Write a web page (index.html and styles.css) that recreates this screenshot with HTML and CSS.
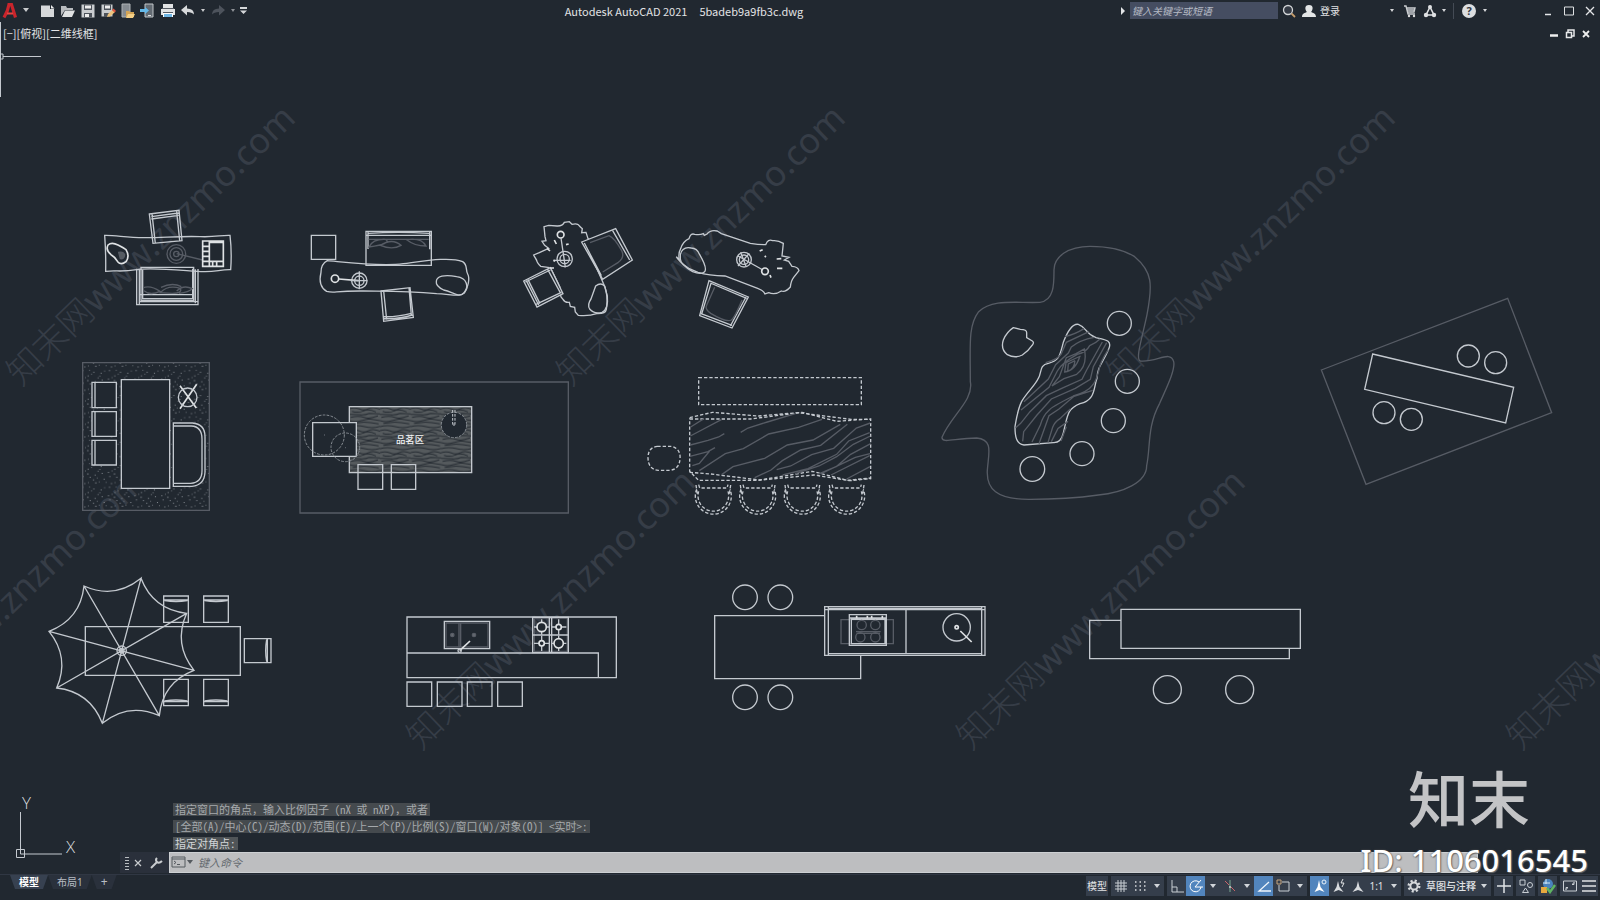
FILE: index.html
```html
<!DOCTYPE html>
<html lang="zh-CN">
<head>
<meta charset="utf-8">
<title>Autodesk AutoCAD 2021</title>
<link rel="stylesheet" href="styles.css">
</head>
<body>
<header class="titlebar">
  <nav class="quick">
    <button class="tool logo" aria-label="应用程序"><svg width="16" height="18" viewBox="0 0 16 18"><path d="M2 15.500Q6 9 7 2.500h2.500L13.500 15.500" fill="none" stroke="#c9252c" stroke-width="3.200"/><path d="M5 11.500h6" stroke="#e8433f" stroke-width="2"/></svg></button>
    <button class="tool drop" aria-label="菜单"><svg width="8" height="5" viewBox="0 0 8 5"><path d="M1 0h6L4 4z" fill="#c8cacc"/></svg></button>
    <button class="tool first" aria-label="新建"><svg width="16" height="16" viewBox="0 0 16 16"><path d="M1 2.500h9V6h4v8H1z" fill="#d6d8da"/><path d="M11 2l3.500 3.500H11z" fill="#eee"/></svg></button>
    <button class="tool" aria-label="打开"><svg width="16" height="16" viewBox="0 0 16 16"><path d="M1 13V3h5l1 2h6v2H5z" fill="#b8bbbe"/><path d="M5 7.500h10L12 14H2z" fill="#dfe1e2"/></svg></button>
    <button class="tool" aria-label="保存"><svg width="16" height="16" viewBox="0 0 16 16"><path d="M1.500 1.500h13v13h-13z" fill="#c9cccf"/><path d="M4 1.500h8V7H4zM4 10h8v4.500H4z" fill="#4d535b"/><path d="M5 2.500h6v3H5zM5 11h4v3H5z" fill="#eee"/></svg></button>
    <button class="tool" aria-label="另存为"><svg width="16" height="16" viewBox="0 0 16 16"><path d="M1.500 1.500h11v12h-11z" fill="#c9cccf"/><path d="M4 1.500h7V7H4zM4 10h5v4H4z" fill="#4d535b"/><path d="M5 2.500h5v3H5z" fill="#eee"/><path d="M7 14l1-3 4.500-4 2.500 2-5 4.500z" fill="#ecc27c"/><path d="M12 7l1.500-1.500L16 8l-1.500 1.500z" fill="#e0553e"/></svg></button>
    <button class="tool" aria-label="从移动设备打开"><svg width="16" height="16" viewBox="0 0 16 16"><path d="M2 1h8v13H2z" fill="#858b91" stroke="#afb3b6"/><path d="M6 8h3l1 1h4v5H6z" fill="#d3a456"/><path d="M8 11h7l-2 4H6z" fill="#f4cf85"/></svg></button>
    <button class="tool" aria-label="保存到移动设备"><svg width="16" height="16" viewBox="0 0 16 16"><path d="M5 1h8v13H5z" fill="#626a72" stroke="#c1c5c8"/><path d="M8 12h3v1H8z" fill="#ddd"/><path d="M0 6h5V4l4 3.500L5 11V9H0z" fill="#65b9e9"/></svg></button>
    <button class="tool" aria-label="打印"><svg width="16" height="16" viewBox="0 0 16 16"><path d="M3 1h10v4H3zM1 6h14v6H1z" fill="#e1e3e4"/><path d="M2 5h12v1H2zM3 9h10v1H3z" fill="#555b63"/><path d="M3 10h10v4H3z" fill="#fff"/><path d="M4 11h8v3H4z" fill="#70b7e5"/></svg></button>
    <button class="tool" aria-label="放弃"><svg width="16" height="16" viewBox="0 0 16 16"><path d="M1 7l6-5v3.500q7 0 7 6-2-2.500-7-2.500v3.500z" fill="#d7d9db"/></svg></button>
    <button class="tool mini" aria-label="放弃列表"><svg width="6" height="4" viewBox="0 0 6 4"><path d="M1 0h4L3 3z" fill="#c8cacc"/></svg></button>
    <button class="tool" aria-label="重做"><svg width="16" height="16" viewBox="0 0 16 16"><path d="M15 7l-6-5v3.500q-7 0-7 6 2-2.500 7-2.500v3.500z" fill="#4d535c"/></svg></button>
    <button class="tool mini" aria-label="重做列表"><svg width="6" height="4" viewBox="0 0 6 4"><path d="M1 0h4L3 3z" fill="#8d9196"/></svg></button>
    <button class="tool mini" aria-label="自定义"><svg width="9" height="8" viewBox="0 0 9 8"><path d="M1 0h7v2H1zM1 3.500h7L4.500 7z" fill="#d5d7d9"/></svg></button>
  </nav>
  <h1 class="title"><span>Autodesk AutoCAD 2021</span><span>5badeb9a9fb3c.dwg</span></h1>
  <div class="account">
    <svg class="expand" width="6" height="8" viewBox="0 0 6 8"><path d="M1 0l4 4-4 4z" fill="#e3e5e7"/></svg>
    <input class="search" type="text" aria-label="搜索" placeholder="键入关键字或短语">
    <button class="tool" aria-label="搜索"><svg width="14" height="14" viewBox="0 0 14 14"><circle cx="6" cy="6" r="4.500" fill="#353b45" stroke="#d2d4d6" stroke-width="1.300"/><path d="M9.500 9.500L13 13" stroke="#c49c6b" stroke-width="1.800"/></svg></button>
    <button class="signin"><svg width="14" height="14" viewBox="0 0 14 14"><path d="M7 1c5 0 4 5 2 7 2 1 5 1 5 5H0c0-4 3-4 5-5-2-2-3-7 2-7z" fill="#e3e5e6"/></svg>登录</button>
    <button class="tool mini" aria-label="登录选项"><svg width="6" height="4" viewBox="0 0 6 4"><path d="M1 0h4L3 3z" fill="#d5d7d9"/></svg></button>
    <button class="tool cart" aria-label="应用商店"><svg width="14" height="14" viewBox="0 0 14 14"><path d="M1 2h2l2 8h7M4 4h8l-1 4H5M4 6h8" fill="none" stroke="#c9cccf" stroke-width="1.400"/><circle cx="6" cy="12" r="1.200" fill="#ddd"/><circle cx="11" cy="12" r="1.200" fill="#ddd"/></svg></button>
    <button class="tool" aria-label="Autodesk App"><svg width="14" height="14" viewBox="0 0 14 14"><path d="M7 3L3 11h8z" fill="none" stroke="#dfe1e3" stroke-width="1.600"/><circle cx="7" cy="3" r="2" fill="#dfe1e3"/><circle cx="3" cy="11" r="2.200" fill="#dfe1e3"/><circle cx="11" cy="11" r="2.200" fill="#dfe1e3"/></svg></button>
    <button class="tool micro" aria-label="App 列表"><svg width="6" height="4" viewBox="0 0 6 4"><path d="M1 0h4L3 3z" fill="#d5d7d9"/></svg></button>
    <span class="rule"></span>
    <button class="tool help" aria-label="帮助">?</button>
    <button class="tool micro" aria-label="帮助列表"><svg width="6" height="4" viewBox="0 0 6 4"><path d="M1 0h4L3 3z" fill="#d5d7d9"/></svg></button>
    <button class="win away" aria-label="最小化"><svg width="10" height="10" viewBox="0 0 10 10"><path d="M2 8.500h6" stroke="#e5e7e9" stroke-width="1.500"/></svg></button>
    <button class="win" aria-label="最大化"><svg width="10" height="10" viewBox="0 0 10 10"><path d="M.5 1h9v8h-9z" fill="none" stroke="#dfe1e3"/></svg></button>
    <button class="win" aria-label="关闭"><svg width="10" height="10" viewBox="0 0 10 10"><path d="M1 1l8 8M9 1L1 9" stroke="#e5e7e9" stroke-width="1.300"/></svg></button>
  </div>
</header>

<main class="workspace">
  <svg class="drawing" viewBox="0 22 1600 852" role="img" aria-label="茶桌与岛台平面图">
    <defs>
      <pattern id="carpet" width="80" height="70" patternUnits="userSpaceOnUse">
        <path d="M4 7h3M15 3h2M22 12h3M44 15h3M53 4h2M65 10h3M8 20h3M29 22h3M39 30h3M51 24h2M71 28h3M13 41h3M24 38h2M46 39h3M57 36h2M77 37h2M7 52h3M28 51h2M40 57h3M62 60h3M73 53h2M23 68h3M34 63h2M58 69h3" fill="none" stroke="#8a8f96" stroke-width="3"/>
      </pattern>
      <pattern id="grain" x="808" y="650" width="92" height="66" patternUnits="userSpaceOnUse">
        <path d="M0 0h92v66H0z" fill="#555a5d"/>
        <path d="M0 6q16-5 30 1t28-1 34 2M8 14q18 6 34-1t38 3M0 23l30 1q16 2 30-4l32 2M4 32q24-6 40 0t42-4M0 42q18 6 36 0l24-5 32 5M10 50l28-3q20-1 50 5M0 60q22-6 46 0t46-1" fill="none" stroke="#252b32" stroke-width="3"/>
      </pattern>
      <g id="seat"><path d="M0 0h74v79H0zM0 12h74M3 14q34 6 68 0"/></g>
      <g id="stool"><path d="M-52-33l4 27M52-33l-4 27M-44-34l3 10h82l3-10M-50-20A54 54 0 1 0 50-20M-44-14A46 46 0 1 0 44-14"/></g>
      <g id="burner"><path d="M0-23v46M-23 0h46"/></g>
    </defs>

    <g class="watermark">
      <text transform="translate(21 387) rotate(-44)">知末网<tspan>www.znzmo.com</tspan></text>
      <text transform="translate(571 387) rotate(-44)">知末网<tspan>www.znzmo.com</tspan></text>
      <text transform="translate(1121 387) rotate(-44)">知末网<tspan>www.znzmo.com</tspan></text>
      <text transform="translate(-129 751) rotate(-44)">知末网<tspan>www.znzmo.com</tspan></text>
      <text transform="translate(421 751) rotate(-44)">知末网<tspan>www.znzmo.com</tspan></text>
      <text transform="translate(971 751) rotate(-44)">知末网<tspan>www.znzmo.com</tspan></text>
      <text transform="translate(1521 751) rotate(-44)">知末网<tspan>www.znzmo.com</tspan></text>
    </g>

    <!-- crosshair and axis marker -->
    <g class="axis">
      <path d="M.5 22v75M3 56.500h38M0 54h3v5H0M20.500 812v42H62M16.500 849.500h8v8h-8z"/>
      <text x="22" y="809">Y</text><text x="66" y="853">X</text>
    </g>

    <!-- tea tables and lounge area -->
    <g class="plan" transform="translate(80 190) scale(.33333)">
      <path d="M74 136C110 135 140 144 200 143S310 138 360 140 420 135 450 136Q456 186 452 239C420 238 410 246 370 245S220 231 170 239 110 240 77 244Q78 190 74 136z"/>
      <path d="M208 72L297 61 306 152 219 160zM216 72l10 88M290 64l9 88M214 80l82-11M214 87l82-11"/>
      <path class="bold" d="M84 165q11-10 30 0t24 14q12 20 0 36-15 12-25 0-10-16-20-21-17-13-9-29z"/>
      <path class="dim" d="M116 187q14-3 18 7-1 14-13 12z" fill="#555b61"/>
      <g class="dim"><circle cx="289" cy="192" r="28"/><circle cx="289" cy="192" r="19"/><circle cx="289" cy="192" r="8"/><path d="M290 191l78 19"/></g>
      <path class="bold" d="M368 153h62v76h-62zM388 153v76M390 157h40M390 214h39M369 169h18M369 184h18M369 199h18M369 214h18M398 215v13M410 214v14"/>
      <path d="M170 236v108h184V237M178 236v107M183 232h158v99H183zM188 239v87h150v-90M180 314h162M180 335h172M346 238v102"/>
      <path class="dim" d="M190 293q22-8 50 11-30 14-48-2M241 308q22-24 60-13 7 15-24 15zM243 292q34-16 61-2M290 303q20-20 47-7-10 11-40 14"/>
      <path d="M694 136h73v72h-73z"/>
      <path d="M858 124h196v102H858zM860 136h192M864 125v52M1049 125v53M864 130q90-6 184 0"/>
      <path class="dim" d="M866 148h180M867 171q12-25 50-23 20 13-50 23zM901 166q36-23 62 0-26 15-62 0zM980 149q44-7 58 19-34 0-58-19z"/>
      <path d="M742 212C790 216 900 230 970 221S1110 200 1148 215C1164 225 1156 240 1163 252S1165 293 1153 309C1138 322 1110 312 1070 311 980 303 940 304 850 303S764 311 740 304C720 292 717 272 723 247Q723 222 742 212z"/>
      <path d="M1069 276C1068 258 1094 253 1130 260 1162 264 1167 290 1152 308 1137 326 1120 306 1091 300Q1067 288 1069 276z"/>
      <circle class="bold" cx="765" cy="266" r="11"/><circle cx="838" cy="272" r="23"/><circle cx="838" cy="272" r="14"/><path class="bold" d="M776 267l60 5"/><path d="M812 272h50M838 244v54"/>
      <path d="M903 303L990 293 1000 382 911 394zM911 303l9 86M987 293l7 83M912 386q42 2 85-11M910 380q36 2 84-10"/>
      <path class="dim" d="M8 518h380v443H8z" fill="url(#carpet)"/>
      <path class="solid" d="M124 569h145v326H124zM36 577h73v76H36zM36 665h73v74H36zM36 751h73v74H36zM280 699h57q38 3 38 41v107q-2 39-39 42h-56z"/>
      <path d="M45 577v76M45 665v74M45 751v74M281 708h53q32 2 32 39v95q0 35-34 38h-51"/><path class="bold" d="M300 587l49 67M350 583l-50 73"/><circle cx="323" cy="622" r="28"/>
      <path class="dim" d="M660 576h805v393H660z"/>
      <path d="M808 650h367v198H808z" fill="url(#grain)"/>
      <path class="solid" d="M698 698h131v101H698z"/><path d="M834 824h74v74h-74zM934 824h73v74h-73z"/>
      <g class="fine dotted"><circle cx="733" cy="735" r="60"/><circle cx="796" cy="772" r="43"/></g>
      <path class="dim" d="M732 735h3M795 773h3"/>
      <circle class="solid fine dotted" cx="1122" cy="705" r="38"/><path class="dotted" d="M1118 660v44M1125 660v44M1122 700v10"/>
      <text class="room" x="948" y="760">品茗区</text>
    </g>

    <!-- organic tables and dashed set -->
    <g class="plan" transform="translate(500 200) scale(.33333)">
      <path d="M149 203l-27-4q-11-11-12-18l-9-16 17-7 28-13-12-9-8-12 12-2-3-12-3-30 14-4 25 2q16 1 22-11l15-2 8 8q18-5 23 6l8 7-2 12 13-1 6 19 9 5"/>
      <path d="M247 125q34 54 63 125 16 32 9 78-2 14-29 13-24 8-55 5l-9-10-2-14-13-3-3-12q-13 2-19-9l-6-7-6-24q6-2 0-12L151 203"/>
      <path class="solid" d="M245 126L347 86 397 180 308 238zM253 129l51 98M338 92l51 88"/><path class="dim" d="M270 128l57-21q16 6 38 45 10 20-10 35l-47 29"/>
      <path class="solid" d="M71 243L151 203 189 281 111 321zM79 242l37 73M84 239l36 72M143 208l39 72M76 246l75-36M108 313l76-36"/>
      <circle class="bold" cx="182" cy="104" r="10"/><path d="M183 114l13 88M160 181h52"/><circle cx="194" cy="177" r="23"/><circle cx="194" cy="177" r="14"/>
      <path class="bold" d="M163 120l6 12M198 134l8-2M141 145l9 8M163 179v6M151 204h11"/>
      <path d="M287 258q15-12 27 0l8 30q4 39-16 49-24 6-37-10-8-13 4-30z"/>
      <path d="M538 180Q534 160 542 146q7-22 25-30 5-18 17-13 15 3 26-2l3 5 8-4q11-14 31-9l12 8 87 29q27 4 46 4 7-18 21-12 16-2 32 8l-4 38 21 4-14 8 13 4 10 15q18 1 21 13l-16 20q-8 10-10 29-15 17-27 12-19 13-38 5l-11 4q-3-10-22-17l-98-37q-49-1-81-11l-28-12q-31-22-37-35z"/>
      <path d="M541 164q6-26 33-20 17 0 25 20 25 43 14 52-11 9-35-1-37-22-37-38z"/>
      <circle cx="732" cy="179" r="22"/><circle cx="732" cy="179" r="14"/><path d="M714 168l75 42M748 160l-34 38M722 157l16 42"/><circle class="bold" cx="795" cy="214" r="10"/>
      <path class="bold" d="M779 153l9-4M794 168l4 3M830 177l14-1M831 205h16M810 225l3 8"/>
      <path d="M627 242L745 291 696 384 599 347zM633 250l-28 92M738 291l-47 87M631 249l109 46M603 341l93 35"/><path class="dim" d="M644 262l-25 56q-4 10 13 22 47 28 62 20 9-6 32-60"/>
      <g class="dashed">
        <path d="M596 533h488v81H596zM569 657h183l154-20 104 27 102-7v179l-63 6-107-17-170 16H596l-27-27z"/>
        <path d="M569 653l68-16 138 11 119-10 159 20h60M569 817l63 5 147 18 158-26 105 27 71-7M472 739h42q29 7 26 38-2 31-31 34h-34q-31-3-31-39 1-30 28-33z"/>
        <use href="#stool" x="640" y="888"/><use href="#stool" x="773" y="888"/><use href="#stool" x="907" y="888"/><use href="#stool" x="1040" y="888"/>
      </g>
      <path class="dim" d="M572 681l40-25M571 708l93-49M571 735l53-14 32-10 17-10M570 769l54-14 21-12M577 797l21-7 31-37M598 812l78-51 54-15 76-44 90-20 70-24M722 697l22-13 58-18 84-25M665 824l34-24 95-25 68-40 77-15 82-47M764 833l49-23 34-28 55-32 60-14 80-63M830 809l42-11 63-34 66-19 68-61 42-15M848 825l76-19 86-43 36-40 63-25M887 821l70-23 53-28 50-37 51-25M951 824l59-25 42-36 60-32M965 820l101-48 44-11M993 825l116-58M1040 837l70-37"/>
    </g>

    <!-- garden table -->
    <g class="plan" transform="translate(920 220) scale(.33333)">
      <path class="dim" d="M510 79C448 79 400 108 402 153 402 193 402 241 360 247 290 250 217 235 176 275 144 317 151 375 151 485 162 541 93 587 66 652 65 672 105 654 170 654 222 659 205 701 202 751 199 805 228 839 330 838 405 838 478 833 535 825 608 818 680 788 680 737 692 680 681 620 719 550 737 508 767 450 761 425 751 389 710 428 661 423 645 417 667 352 681 284 698 194 698 155 644 110 611 89 570 79 510 79z"/>
      <path d="M475 313C500 322 495 340 528 353 557 359 579 361 565 390 548 430 532 440 531 475 520 505 527 540 480 551 440 567 443 588 430 639 425 660 417 669 400 668L312 675C289 672 285 650 285 620 290 588 293 568 305 544 325 512 345 497 355 475 366 457 357 435 385 430 419 420 419 408 430 367Q452 309 475 313z"/>
      <path d="M280 323l21 5q20 0 19 11v14l17 10q6 4 1 11-12 18-31 31-22 11-45-1-21-17-12-44 10-24 30-37z"/>
      <path class="dim" d="M492 326q-27 17-57 24M507 335l-68 32-16 36q-10 15-46 25M523 352q-44 8-69 29l-9 18-38 35-22 43-73 68M540 357q-12 12-31 20-10 20-37 26-47 25-60 50l-25 49-84 68M560 368l-40 72-9 38-45 27-72 32-43 48-40 50-3 29M565 389q-26 38-29 65-9 32-19 42-12 18-57 32-68 34-73 43-18 16-26 44l-25 51M547 366l-47 84-14 28-56 25-51 24-49 48-28 35-15 13M495 386l-27 15-29 12-21 57-22 28 36-22 38-13q34-25 23-76M482 408l-44 20-4 28q31-3 45-45M465 422l-20 10-2 21q20-4 22-31M518 511l-56 18-45 38-30 20-30 84M451 567q-25 23-31 29-17 11-22 26l-14 45M439 620l-16 43M444 604l-30 21-20 40"/>
      <circle cx="598" cy="310" r="36"/><circle cx="622" cy="484" r="36"/><circle cx="580" cy="602" r="36"/><circle cx="486" cy="701" r="36"/><circle cx="337" cy="747" r="37"/>
    </g>

    <!-- umbrella table -->
    <g class="plan" transform="translate(30 560) scale(.33333)">
      <path d="M166 200h465v146H166zM643 236h80v72h-80zM712 236v72M710 239q-6 33 0 66"/>
      <use href="#seat" x="401" y="108"/><use href="#seat" x="521" y="108"/><use href="#seat" transform="translate(401 437) scale(1 -1)"/><use href="#seat" transform="translate(521 437) scale(1 -1)"/>
      <path d="M333 55Q369 149 470 160 429 252 492 331 398 367 388 467 295 426 217 490 180 395 80 384 120 292 57 214 151 178 162 78 254 119 333 55L217 490M470 160L80 384M492 331L57 214M388 467L162 78"/><circle cx="275" cy="272" r="14"/><circle cx="275" cy="272" r="7"/>
    </g>

    <!-- island with sink and hob -->
    <g class="plan" transform="translate(380 570) scale(.33333)">
      <path d="M81 141h628v182H81zM81 249h574v74M81 336h74v73H81zM172 336h74v73h-74zM262 336h74v73h-74zM353 336h74v73h-74zM193 154h136v82H193z"/>
      <g class="dim"><path d="M198 159h126v72H198zM237 157v75M242 157v75"/><circle cx="217" cy="195" r="5" fill="#666b71"/><circle cx="282" cy="195" r="5" fill="#666b71"/><path d="M463 145h99v99h-99z"/></g>
      <path class="bold" d="M239 242l31-29"/><circle cx="239" cy="242" r="5"/>
      <path d="M458 142h107v106H458zM508 143v104M515 143v104M460 195h104"/><use href="#burner" x="485" y="171"/><use href="#burner" x="536" y="171"/><use href="#burner" x="485" y="220"/><use href="#burner" x="536" y="220"/>
      <g class="bold solid"><circle cx="485" cy="171" r="14"/><circle cx="536" cy="171" r="8"/><circle cx="485" cy="220" r="8"/><circle cx="536" cy="220" r="14"/></g>
    </g>

    <!-- island bar with worktop -->
    <g class="plan" transform="translate(690 560) scale(.33333)">
      <path d="M404 167H74v189h438v-70"/><path class="solid" d="M404 140h481v146H404z"/><path d="M415 145h460v136H415zM404 149h481M648 145v136M875 140v146M415 140v146"/>
      <path class="dim" d="M453 179h157v72H453zM498 215h74M500 220h70"/><path d="M478 164h111v92H478zM484 178h101v73H484zM480 174h108"/><path class="bold" d="M500 167v8M532 167v8M545 167v8M577 167v8"/>
      <g class="dim"><circle cx="515" cy="195" r="14"/><circle cx="556" cy="195" r="14"/><circle cx="511" cy="232" r="14"/><circle cx="556" cy="232" r="14"/></g>
      <circle cx="800" cy="202" r="41"/><circle class="bold" cx="800" cy="202" r="5"/><path class="bold" d="M811 213l34 33"/>
      <circle cx="165" cy="112" r="37"/><circle cx="271" cy="112" r="37"/><circle cx="165" cy="412" r="37"/><circle cx="271" cy="412" r="37"/>
    </g>

    <!-- angled set and long bench -->
    <g class="plan" transform="translate(1070 280) scale(.33333)">
      <path class="dim" d="M754 270L1313 55 1445 398 888 613z"/><path d="M908 222L1331 322 1307 429 884 328z"/>
      <circle cx="1195" cy="228" r="33"/><circle cx="1277" cy="248" r="33"/><circle cx="942" cy="398" r="33"/><circle cx="1024" cy="418" r="33"/>
      <path d="M153 1021H59v115h599v-31M153 988h538v117H153z"/><circle cx="292" cy="1229" r="42"/><circle cx="509" cy="1229" r="42"/>
    </g>
  </svg>

  <div class="viewbar">
    <div class="viewlabel"><button>[−]</button><button>[俯视]</button><button>[二维线框]</button></div>
    <div class="docwin">
      <button aria-label="最小化视图"><svg width="10" height="10" viewBox="0 0 10 10"><path d="M1 6.500h8" stroke="#eee" stroke-width="2.500"/></svg></button>
      <button aria-label="还原视图"><svg width="10" height="10" viewBox="0 0 10 10"><path d="M3 3V1h6v6H7M1.500 3.500h5v5h-5z" fill="none" stroke="#e7e8e9" stroke-width="1.500"/></svg></button>
      <button aria-label="关闭视图"><svg width="10" height="10" viewBox="0 0 10 10"><path d="M2 2l6 6M8 2L2 8" stroke="#eee" stroke-width="1.800"/></svg></button>
    </div>
  </div>

  <section class="command">
    <div class="history">
      <p>指定窗口的角点，输入比例因子 (nX 或 nXP)，或者</p>
      <p>[全部(A)/中心(C)/动态(D)/范围(E)/上一个(P)/比例(S)/窗口(W)/对象(O)] &lt;实时&gt;:</p>
      <p class="latest">指定对角点:</p>
    </div>
    <div class="entry">
      <span class="grip"></span>
      <button class="close" aria-label="关闭命令行"><svg width="8" height="8" viewBox="0 0 8 8"><path d="M1 1l6 6M7 1L1 7" stroke="#c9cccf" stroke-width="1.200"/></svg></button>
      <button class="wrench" aria-label="自定义"><svg width="14" height="14" viewBox="0 0 14 14"><path d="M2 12l6-6" stroke="#c9cccf" stroke-width="2"/><path d="M8 2q-2 2 0 4t5-1" fill="none" stroke="#c9cccf" stroke-width="2"/></svg></button>
      <label class="prompt"><svg width="23" height="14" viewBox="0 0 23 14"><path d="M1 2h13v10H1zM1 4h13M3 6l2 1.500L3 9M6 9.500h3" fill="none" stroke="#555a5f"/><path d="M16 5h6l-3 4z" fill="#555a5f"/></svg><input type="text" aria-label="命令" placeholder="键入命令"></label>
    </div>
  </section>

  <div class="brand"><strong>知末</strong><span>ID: 1106016545</span></div>
</main>

<footer class="status">
  <nav class="tabs"><button class="tab current">模型</button><button class="tab">布局1</button><button class="tab add" aria-label="新建布局">+</button></nav>
  <div class="modes">
    <div class="group"><button class="mode-text">模型</button></div>
    <div class="group">
      <button class="mode" aria-label="栅格"><svg width="14" height="14" viewBox="0 0 14 14"><path d="M4 1v12M7 1v12M10 1v12M1 4h12M1 7h12M1 10h12" stroke="#c9ced4" fill="none"/></svg></button>
      <button class="mode" aria-label="捕捉"><svg width="14" height="14" viewBox="0 0 14 14"><path d="M2 3h11M2 7h11M2 11h11" stroke="#d8dbde" stroke-width="1.500" stroke-dasharray="1.500 3"/></svg></button>
      <button class="arrow" aria-label="捕捉选项"></button>
    </div>
    <div class="group">
      <button class="mode" aria-label="正交"><svg width="14" height="14" viewBox="0 0 14 14"><path d="M2 1v12h12M2 8h5v5" stroke="#c9ced4" fill="none"/></svg></button>
      <button class="mode on" aria-label="极轴追踪"><svg width="16" height="16" viewBox="0 0 16 16"><path d="M11 4A5.500 5.500 0 1 0 13 9M7 9h8M7 9l6-7" stroke="#fff" fill="none"/></svg></button>
      <button class="arrow" aria-label="极轴选项"></button>
      <button class="mode" aria-label="等轴测"><svg width="14" height="14" viewBox="0 0 14 14"><path d="M2 2l4 4M8 8l4 4" stroke="#c9656a"/><path d="M7 1v12" stroke="#7aa992"/><path d="M7 7v2" stroke="#fff"/></svg></button>
      <button class="arrow" aria-label="等轴测选项"></button>
      <button class="mode on" aria-label="对象捕捉追踪"><svg width="14" height="14" viewBox="0 0 14 14"><path d="M12 3L2 12h12" stroke="#eef5fb" stroke-width="1.300" fill="none"/></svg></button>
      <button class="mode" aria-label="对象捕捉"><svg width="16" height="16" viewBox="0 0 16 16"><path d="M7 4h7v9H4V7" stroke="#c9ced4" fill="none"/><path d="M2 2h4v4H2z" stroke="#c7a57f" fill="none"/></svg></button>
      <button class="arrow" aria-label="捕捉列表"></button>
    </div>
    <div class="group">
      <button class="mode on" aria-label="注释可见性"><svg width="16" height="16" viewBox="0 0 16 16"><path d="M7 2l1.500 7 4 5-5-2-5 2 3-5z" fill="#fff"/><circle cx="12" cy="4" r="2" fill="none" stroke="#e9f3fb"/></svg></button>
      <button class="mode" aria-label="自动缩放"><svg width="16" height="16" viewBox="0 0 16 16"><path d="M7 3l1.500 6 4 5-5-2-5 2 3-5z" fill="#d8dbde"/><path d="M12 1l-2 4h3l-2 4" stroke="#e4e6e8" fill="none"/></svg></button>
      <button class="mode" aria-label="注释比例"><svg width="16" height="16" viewBox="0 0 16 16"><path d="M8 3l1.500 6 4 5-5.500-2-5.500 2 4-5z" fill="#d8dbde"/></svg></button>
      <button class="scale">1:1</button><button class="arrow" aria-label="比例列表"></button>
    </div>
    <div class="group">
      <button class="mode" aria-label="设置"><svg width="14" height="14" viewBox="0 0 14 14"><circle cx="7" cy="7" r="5.300" fill="none" stroke="#d6d9dc" stroke-width="2.400" stroke-dasharray="2.100 2.062"/><circle cx="7" cy="7" r="3.600" fill="none" stroke="#d6d9dc" stroke-width="2"/></svg></button>
      <button class="space">草图与注释</button><button class="arrow" aria-label="工作空间列表"></button>
    </div>
    <div class="group"><button class="mode" aria-label="注释监视器"><svg width="14" height="14" viewBox="0 0 14 14"><path d="M7 0v14M0 7h14" stroke="#e0e3e6" stroke-width="1.500"/></svg></button></div>
    <div class="group"><button class="mode" aria-label="隔离对象"><svg width="16" height="16" viewBox="0 0 16 16"><path d="M2 2h5v5H2zM7.500 10l3 4.500h-6z" fill="none" stroke="#c9ced4"/><circle cx="12" cy="7" r="2.500" fill="none" stroke="#c9ced4"/></svg></button></div>
    <div class="group"><button class="mode" aria-label="硬件加速"><svg width="16" height="16" viewBox="0 0 16 16"><circle cx="8" cy="6" r="5" fill="#4a83bd"/><path d="M3 5h7M6 1v5" stroke="#d5e9f7"/><path d="M1 9h6v6H1z" fill="#e6a93f"/><path d="M7 10l3 4 5-7" fill="none" stroke="#5fb463" stroke-width="2.500"/></svg></button></div>
    <div class="group">
      <button class="mode" aria-label="全屏显示"><svg width="16" height="16" viewBox="0 0 16 16"><path d="M1.500 3h13v10h-13zM10 6.500h2v-2M6 9.500H4v2M10.500 6l2-2M5.500 10l-2 2" fill="none" stroke="#c9ced4"/></svg></button>
      <button class="mode" aria-label="自定义状态栏"><svg width="14" height="14" viewBox="0 0 14 14"><path d="M0 2h14M0 7h14M0 12h14" stroke="#dfe2e5" stroke-width="1.700"/></svg></button>
    </div>
  </div>
</footer>
</body>
</html>
```
FILE: styles.css
```css
* { box-sizing: border-box; }
body {
  margin: 0;
  min-height: 100vh;
  display: grid;
  grid-template-rows: auto 1fr auto;
  background: #212830;
  color: #e1e3e5;
  font: 11px/14px "Noto Sans", "Noto Sans CJK SC", sans-serif;
  overflow: hidden;
}
button {
  border: 0;
  padding: 0;
  background: none;
  color: inherit;
  font: inherit;
  display: flex;
  align-items: center;
  justify-content: center;
}
svg { display: block; flex: none; }

.titlebar { display: flex; align-items: center; height: 22px; padding-bottom: 1px; }
.quick, .account { display: flex; align-items: center; }
.tool { width: 20px; height: 20px; }
.tool.mini { width: 12px; }
.tool.micro { width: 8px; }
.tool.drop { width: 12px; }
.tool.first { margin-left: 6px; }
.quick .mini { width: 10px; }
.title { flex: 1; margin: 0; display: flex; justify-content: center; gap: 12px; font: 400 11px/14px "Noto Sans CJK SC", sans-serif; white-space: nowrap; }
.search {
  width: 148px;
  height: 17px;
  margin: 0 1px 0 4px;
  padding: 0 2px;
  border: 0;
  background: #454d61;
  color: #dfe2e6;
  font: italic 10px/15px "Noto Sans", "Noto Sans CJK SC", sans-serif;
}
.search::placeholder { color: #b5bac4; opacity: 1; }
.signin { gap: 4px; margin: 0 46px 0 3px; font-size: 10px; }
.cart { margin-left: 2px; }
.rule { width: 1px; height: 16px; margin: 0 6px 0 5px; background: #444b55; }
.tool.help { width: 14px; height: 14px; margin: 0 5px 0 2px; border-radius: 50%; background: #dcdee0; color: #333942; font-weight: 700; }
.win { width: 21px; height: 20px; }
.win.away { margin-left: 48px; }

.workspace { position: relative; display: flex; flex-direction: column; justify-content: space-between; min-height: 0; }
.drawing { position: absolute; inset: 0; width: 100%; height: 100%; }
.plan, .axis { fill: none; stroke: #c4c9cf; stroke-width: 4; }
.axis { stroke-width: 1; }
.axis text { fill: #d8dbde; stroke: none; font: 300 17px "Open Sans", sans-serif; }
.dim { stroke: #575c65; stroke-width: 4; }
.bold { stroke: #dfe2e4; stroke-width: 5; }
.solid { fill: #212830; }
.fine { stroke: #888e94; }
.dotted { stroke-dasharray: 8 4; stroke-width: 3; }
.dashed { stroke-dasharray: 10 6; }
.room { fill: #f2f3f4; stroke: none; font: 500 28px "Noto Sans CJK SC", sans-serif; }
.watermark { fill: #363d47; font: 300 35px "Noto Sans CJK SC", sans-serif; }
.watermark tspan { font: 400 35px "Noto Sans", sans-serif; }

.viewbar { position: relative; display: flex; justify-content: space-between; align-items: center; height: 24px; padding: 0 9px 0 3px; }
.viewlabel, .docwin { display: flex; }
.viewlabel { padding-bottom: 3px; }
.viewlabel button { font: 11px/14px "Noto Sans CJK SC", sans-serif; }
.docwin { gap: 6px; }

.command { position: relative; margin: 0 122px 1px 120px; }
.history { display: flex; flex-direction: column; align-items: flex-start; gap: 4px; margin: 0 0 2px 53px; }
.history p {
  margin: 0;
  padding: 0 2px;
  background: #454a4e;
  color: #a5a9ac;
  font: 11px/13px "Noto Sans Mono CJK SC", "Noto Sans CJK SC", monospace;
  white-space: nowrap;
}
.history .latest { background: #505558; color: #d2d5d7; }
.entry { display: flex; align-items: center; height: 21px; background: #2a303b; }
.grip { width: 4px; height: 14px; margin: 0 5px; background: radial-gradient(circle, #b9bdc1 1px, transparent 1px) 0 0 / 2px 3px; }
.close { width: 8px; height: 16px; }
.wrench { width: 14px; margin: 0 6px 0 7px; }
.prompt { flex: 1; display: flex; align-items: center; gap: 4px; height: 21px; padding: 0 0 1px 1px; background: #bdbec0; border: 1px solid #cdd0d3; }
.prompt input { flex: 1; border: 0; padding: 0; background: none; font: italic 11px/16px "Noto Sans CJK SC", sans-serif; color: #333; }
.prompt input::placeholder { color: #666b70; opacity: 1; }

.brand { position: absolute; right: 12px; bottom: -6px; display: flex; flex-direction: column; align-items: flex-end; }
.brand strong { margin-right: 58px; color: #c3c4c6; font: 500 61px/62px "Noto Sans CJK SC", sans-serif; }
.brand span { margin-top: 12px; color: #fff; font: 500 31px/40px "Noto Sans", sans-serif; text-shadow: 0 0 2px #555, 1px 1px 1px #777; }

.status { display: flex; justify-content: space-between; height: 26px; border-top: 1px solid #303743; }
.tabs { display: flex; align-items: flex-start; padding-left: 10px; }
.tab { height: 14px; padding: 0 9px; background: #2a313c; color: #b8bdc4; font-size: 10px; clip-path: polygon(0 0, 100% 0, calc(100% - 5px) 100%, 5px 100%); }
.tab.current { background: #374150; color: #fff; font-weight: 700; }
.tab.add { font-size: 12px; }
.modes { display: flex; gap: 3px; padding: 1px 2px 0 0; }
.group { display: flex; height: 20px; background: #353e4b; }
.mode { width: 19px; height: 20px; }
.mode.on { background: #5285bd; }
.mode-text { width: 22px; font-size: 10px; }
.arrow { width: 15px; height: 20px; }
.arrow::before { content: ""; border: 3px solid transparent; border-top: 4px solid #d1d5d9; border-bottom: 0; }
.scale { width: 19px; font-size: 10px; }
.space { width: 53px; font-size: 10px; font-weight: 500; justify-content: flex-end; }
```
